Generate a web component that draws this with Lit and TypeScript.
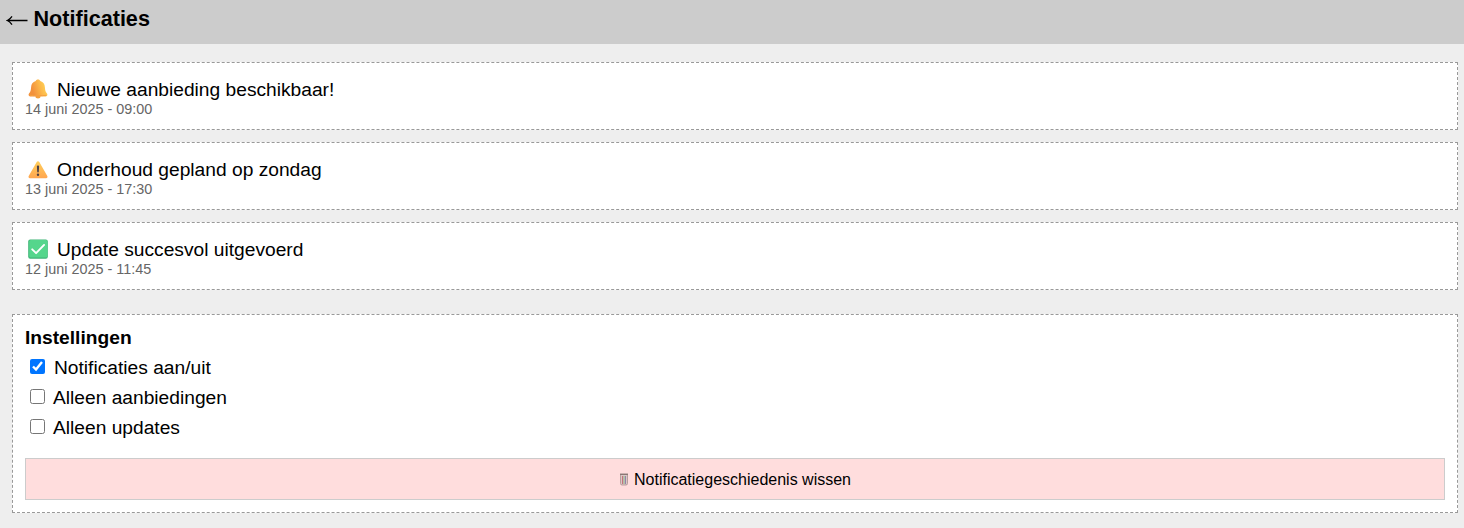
import { LitElement, html, css, svg } from "lit";
import { customElement, property } from "lit/decorators.js";

const bell = svg`
  <defs>
    <linearGradient id="g" x1="0" x2="1" y1="0.3" y2="0">
      <stop offset="0.1" stop-color="#f2913c"/><stop offset="0.5" stop-color="#fcb649"/><stop offset="0.85" stop-color="#ffd257"/>
    </linearGradient>
  </defs>
  <ellipse cx="10" cy="17.800" rx="2.600" ry="1.800" fill="#f2a040"/>
  <path d="M10 .4c1.300 0 2 .7 2.300 1.600 3 .8 4.400 3.300 4.600 6.200.2 3.100.6 4.600 2.100 6.400.9 1.200.4 2.800-1.100 2.800H2.100c-1.500 0-2-1.600-1.100-2.800 1.500-1.800 1.900-3.300 2.100-6.400.2-2.900 1.600-5.400 4.600-6.200C8 1.100 8.700.4 10 .4z" fill="url(#g)"/>
  <path d="M1.600 16.300c5 .5 11.800.5 16.800 0" fill="none" stroke="#f6a040" stroke-width="1"/>`;

const warning = svg`
  <defs>
    <linearGradient id="g" x1="0" x2="0" y1="0" y2="1">
      <stop offset="0" stop-color="#ffcf5c"/><stop offset="1" stop-color="#ffa64f"/>
    </linearGradient>
  </defs>
  <path d="M8.700 2.900c.6-1 2-1 2.600 0l8 14.200c.6 1-.1 2.100-1.200 2.100H1.900c-1.100 0-1.800-1.100-1.200-2.100z" fill="url(#g)"/>
  <path d="M8.900 7.600c0-.6.500-1 1.100-1s1.100.4 1.100 1l-.3 5.200c0 .5-.3.800-.8.800s-.8-.3-.8-.8z" fill="#4b4047"/>
  <circle cx="10" cy="15.700" r="1.200" fill="#4b4047"/>`;

const check = svg`
  <rect x="0.200" y="0.500" width="19.600" height="19.300" rx="2" fill="#3fb477"/>
  <rect x="1.200" y="1" width="18.200" height="17.600" rx="1.600" fill="#55d68c"/>
  <path d="M4.200 10.300l3.900 3.900 8-8.300" fill="none" stroke="#fff" stroke-width="1.900" stroke-linecap="round" stroke-linejoin="round"/>`;

@customElement("notification-card")
class NotificationCard extends LitElement {
  @property() text = "";
  @property() date = "";
  @property({ attribute: false }) icon: unknown;

  static styles = css`
    :host {
      display: block;
      box-sizing: border-box;
      height: 68px;
      padding: 13px 12px 0;
      border: 1px dashed #999;
      background: #fff;
    }
    .title {
      display: flex;
      align-items: flex-start;
      height: 26px;
      font-size: 19.2px;
      line-height: 28px;
    }
    .icon {
      width: 20px;
      height: 20px;
      margin: 3px 9px 0 3px;
    }
    .date {
      font-size: 14.4px;
      line-height: 14px;
      color: #666;
    }
  `;

  render() {
    return html`
      <div class="title"><svg class="icon" viewBox="0 0 20 20">${this.icon}</svg>${this.text}</div>
      <div class="date">${this.date}</div>
    `;
  }
}

@customElement("app-root")
class AppRoot extends LitElement {
  static styles = css`
    :host {
      display: block;
      height: 528px;
      background: #eee;
      color: #000;
      font-family: "Liberation Sans", Arial, sans-serif;
    }
    .header {
      display: flex;
      box-sizing: border-box;
      height: 44px;
      padding: 6px 6px 0;
      background: #ccc;
      font-size: 21.6px;
      line-height: 25px;
      font-weight: bold;
    }
    .back {
      width: 22px;
      height: 12px;
      margin: 8px 5.500px 0 0;
    }
    .content {
      display: flex;
      flex-direction: column;
      gap: 12px;
      padding: 18px 6px 0 12px;
    }
    .settings {
      box-sizing: border-box;
      height: 199px;
      margin-top: 12px;
      padding: 12px 12px 0;
      border: 1px dashed #999;
      background: #fff;
      font-size: 19.2px;
    }
    .heading {
      font-weight: bold;
      line-height: 22px;
    }
    .option {
      display: flex;
      align-items: flex-start;
      height: 22px;
      margin-top: 8px;
      line-height: 22px;
    }
    .option input {
      width: 15px;
      height: 15px;
      margin: 2px 8.500px 0 4.500px;
    }
    .option input:checked {
      margin-right: 9.500px;
    }
    .clear {
      display: flex;
      align-items: center;
      justify-content: center;
      box-sizing: border-box;
      width: 100%;
      height: 42px;
      margin-top: 19px;
      padding: 2px 0 0;
      border: 1px solid #ccc;
      background: #fdd;
      color: #000;
      font: 16px "Liberation Sans", Arial, sans-serif;
    }
    .bin {
      width: 10px;
      height: 14px;
      margin: 0 5px 2px 0;
    }
  `;

  render() {
    return html`
      <div class="header">
        <svg class="back" viewBox="0 0 22 12" fill="none" stroke="#000" stroke-width="1.300">
          <path d="M1.500 6.500H21.500M6 2.300Q4 5.300 1.300 6.500Q4 7.700 6 10.700"/>
        </svg>
        <span>Notificaties</span>
      </div>
      <div class="content">
        <notification-card .icon=${bell} text="Nieuwe aanbieding beschikbaar!" date="14 juni 2025 - 09:00"></notification-card>
        <notification-card .icon=${warning} text="Onderhoud gepland op zondag" date="13 juni 2025 - 17:30"></notification-card>
        <notification-card .icon=${check} text="Update succesvol uitgevoerd" date="12 juni 2025 - 11:45"></notification-card>
        <div class="settings">
          <div class="heading">Instellingen</div>
          <label class="option"><input type="checkbox" checked>Notificaties aan/uit</label>
          <label class="option"><input type="checkbox">Alleen aanbiedingen</label>
          <label class="option"><input type="checkbox">Alleen updates</label>
          <button class="clear">
            <svg class="bin" viewBox="0 0 10 14" fill="none">
              <path d="M1.500 2.500h7V11.500Q8.500 13 7 13H3Q1.500 13 1.500 11.500z" fill="#dcc6c4" stroke="#a8918f" stroke-width=".8"/>
              <path d="M3.500 4v8" stroke="#c8707c"/><path d="M5 4v8" stroke="#8db48d"/><path d="M6.500 4v8" stroke="#9085a8"/>
              <path d="M1 2.200h8" stroke="#7d6c6b" stroke-width="1.200"/>
            </svg>
            Notificatiegeschiedenis wissen
          </button>
        </div>
      </div>
    `;
  }
}
